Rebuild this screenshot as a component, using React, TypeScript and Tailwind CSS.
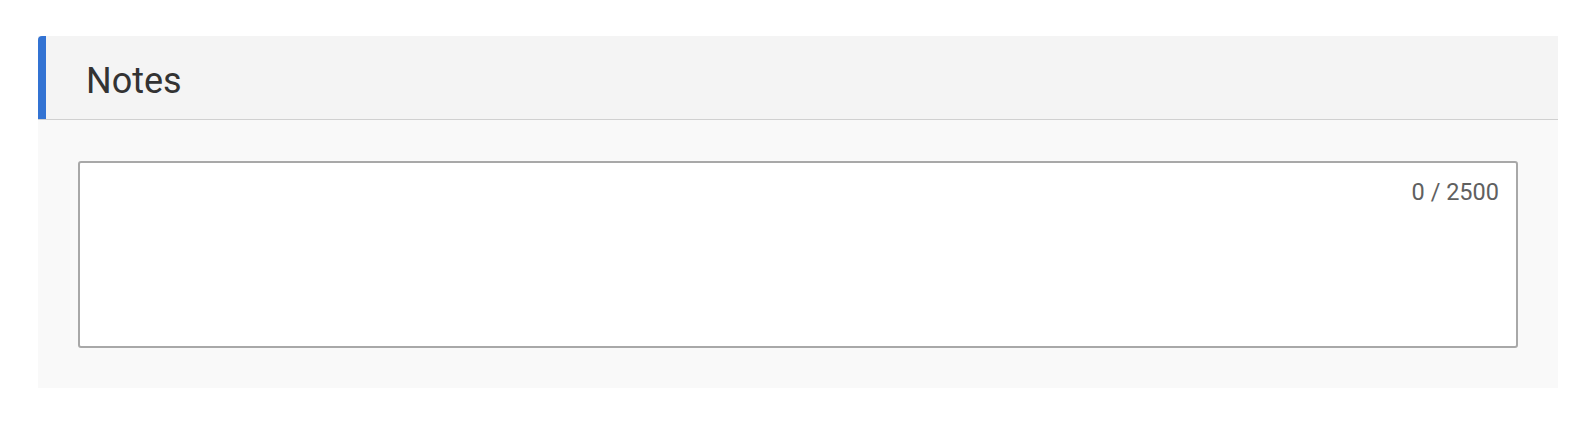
import { useState } from 'react';

const MAX_LENGTH = 2500;

function NotesCard() {
  const [value, setValue] = useState('');

  return (
    <section className="w-full bg-[#f9f9f9]">
      <div className="flex h-[84px] border-b border-[#d0d0d0] bg-[#f4f4f4]">
        <div className="w-2 shrink-0 rounded-tl-[4px] bg-[#3373d3]" />
        <h2 className="flex items-center pl-[40px] pt-[6px] text-[36px] font-normal text-[#333333]">Notes</h2>
      </div>
      <div className="p-10 pt-[41px]">
        <div className="relative h-[187px] rounded-[3px] border-2 border-[#a8a8a8] bg-white">
          <textarea
            value={value}
            maxLength={MAX_LENGTH}
            onChange={event => setValue(event.target.value)}
            className="h-full w-full resize-none bg-transparent px-4 py-3 pr-36 text-[18px] text-[#333333] outline-none"
          />
          <span className="absolute right-[17px] top-[12px] text-[23.5px] text-[#606060]">
            {value.length} / {MAX_LENGTH}
          </span>
        </div>
      </div>
    </section>
  );
}

export default function App() {
  return (
    <div className="min-h-[422px] bg-white pb-[34px] pl-[38px] pr-[36px] pt-[36px] font-['Roboto','Liberation_Sans',sans-serif]">
      <NotesCard />
    </div>
  );
}
